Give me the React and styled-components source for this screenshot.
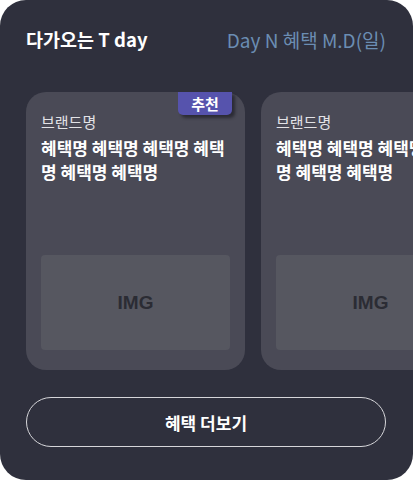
import React from 'react';
import styled, { createGlobalStyle } from 'styled-components';

const GlobalStyle = createGlobalStyle`
  html, body {
    margin: 0;
    padding: 0;
    background: #ffffff;
  }
  body {
    font-family: "Noto Sans CJK KR", "Noto Sans", sans-serif;
  }
`;

const Panel = styled.section`
  width: 413px;
  height: 480px;
  box-sizing: border-box;
  background: #2f303d;
  border-radius: 26px;
  padding: 24px 0 33px 26px;
  display: flex;
  flex-direction: column;
  overflow: hidden;
`;

const Header = styled.header`
  display: flex;
  align-items: center;
  justify-content: space-between;
  padding-right: 27px;
  height: 30px;
`;

const Title = styled.h2`
  margin: 0;
  font-size: 18.5px;
  font-weight: 700;
  color: #ffffff;
`;

const DateLabel = styled.span`
  font-size: 19px;
  color: #6b8db3;
`;

const Rail = styled.div`
  display: flex;
  gap: 16px;
  margin-top: 38px;
  overflow: hidden;
`;

const Card = styled.article`
  position: relative;
  flex: 0 0 219px;
  height: 278px;
  box-sizing: border-box;
  background: #4a4a56;
  border-radius: 20px;
  padding: 19px 12px 20px 15px;
  display: flex;
  flex-direction: column;
`;

const Badge = styled.span`
  position: absolute;
  top: 0;
  right: 13px;
  width: 54px;
  height: 23px;
  display: flex;
  align-items: center;
  justify-content: center;
  background: #5653ad;
  color: #ffffff;
  font-size: 15px;
  font-weight: 700;
  border-radius: 0 0 5px 5px;
  box-shadow: 3px 3px 3px rgba(20, 20, 28, 0.55);
`;

const Brand = styled.div`
  font-size: 15px;
  color: #e2e2e6;
  line-height: 22px;
`;

const Benefit = styled.div`
  margin-top: 3px;
  font-size: 17px;
  font-weight: 700;
  color: #ffffff;
  line-height: 24px;
  word-break: break-all;
`;

const Thumb = styled.div`
  margin-top: auto;
  margin-right: 3px;
  height: 95px;
  background: #565760;
  border-radius: 4px;
  display: flex;
  align-items: center;
  justify-content: center;
  font-family: "Liberation Sans", Arial, sans-serif;
  font-weight: 700;
  font-size: 19px;
  color: #2b2c34;
`;

const MoreButton = styled.button`
  margin-top: 27px;
  width: 360px;
  height: 50px;
  background: transparent;
  border: 1px solid #d6d6da;
  border-radius: 25px;
  color: #ffffff;
  font-family: "Noto Sans CJK KR", "Noto Sans", sans-serif;
  font-size: 17px;
  font-weight: 700;
  cursor: pointer;
`;

const cards = [
  { brand: '브랜드명', title: '혜택명 혜택명 혜택명 혜택명 혜택명 혜택명', recommended: true },
  { brand: '브랜드명', title: '혜택명 혜택명 혜택명 혜택명 혜택명 혜택명', recommended: false },
];

export default function App() {
  return (
    <>
      <GlobalStyle />
      <Panel>
        <Header>
          <Title>다가오는 T day</Title>
          <DateLabel>Day N 혜택 M.D(일)</DateLabel>
        </Header>
        <Rail>
          {cards.map((c, i) => (
            <Card key={i}>
              {c.recommended && <Badge>추천</Badge>}
              <Brand>{c.brand}</Brand>
              <Benefit>{c.title}</Benefit>
              <Thumb>IMG</Thumb>
            </Card>
          ))}
        </Rail>
        <MoreButton>혜택 더보기</MoreButton>
      </Panel>
    </>
  );
}
